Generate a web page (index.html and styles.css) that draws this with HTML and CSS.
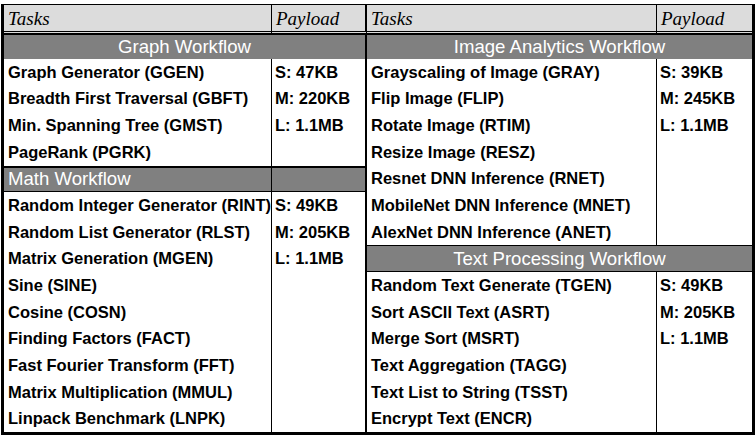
FILE: index.html
```html
<!DOCTYPE html>
<html>
<head>
<meta charset="utf-8">
<link rel="stylesheet" href="styles.css">
</head>
<body>
<table class="tasks">
  <colgroup>
    <col class="c-task"><col class="c-pay"><col class="c-task2"><col class="c-pay2">
  </colgroup>
  <thead>
    <tr>
      <th class="b1">Tasks</th><th class="b2">Payload</th><th class="b1">Tasks</th><th>Payload</th>
    </tr>
  </thead>
  <tbody>
    <tr class="first">
      <td colspan="2" class="band b2">Graph Workflow</td>
      <td colspan="2" class="band">Image Analytics Workflow</td>
    </tr>
    <tr>
      <td class="b1">Graph Generator (GGEN)</td><td class="b2">S: 47KB</td>
      <td class="b1">Grayscaling of Image (GRAY)</td><td>S: 39KB</td>
    </tr>
    <tr>
      <td class="b1">Breadth First Traversal (GBFT)</td><td class="b2">M: 220KB</td>
      <td class="b1">Flip Image (FLIP)</td><td>M: 245KB</td>
    </tr>
    <tr>
      <td class="b1">Min. Spanning Tree (GMST)</td><td class="b2">L: 1.1MB</td>
      <td class="b1">Rotate Image (RTIM)</td><td>L: 1.1MB</td>
    </tr>
    <tr>
      <td class="b1">PageRank (PGRK)</td><td class="b2"></td>
      <td class="b1">Resize Image (RESZ)</td><td></td>
    </tr>
    <tr>
      <td class="band band-left math b1">Math Workflow</td><td class="band math b2"></td>
      <td class="b1">Resnet DNN Inference (RNET)</td><td></td>
    </tr>
    <tr>
      <td class="b1">Random Integer Generator (RINT)</td><td class="b2">S: 49KB</td>
      <td class="b1">MobileNet DNN Inference (MNET)</td><td></td>
    </tr>
    <tr>
      <td class="b1">Random List Generator (RLST)</td><td class="b2">M: 205KB</td>
      <td class="b1">AlexNet DNN Inference (ANET)</td><td></td>
    </tr>
    <tr>
      <td class="b1">Matrix Generation (MGEN)</td><td class="b2">L: 1.1MB</td>
      <td colspan="2" class="band text">Text Processing Workflow</td>
    </tr>
    <tr>
      <td class="b1">Sine (SINE)</td><td class="b2"></td>
      <td class="b1">Random Text Generate (TGEN)</td><td>S: 49KB</td>
    </tr>
    <tr>
      <td class="b1">Cosine (COSN)</td><td class="b2"></td>
      <td class="b1">Sort ASCII Text (ASRT)</td><td>M: 205KB</td>
    </tr>
    <tr>
      <td class="b1">Finding Factors (FACT)</td><td class="b2"></td>
      <td class="b1">Merge Sort (MSRT)</td><td>L: 1.1MB</td>
    </tr>
    <tr>
      <td class="b1">Fast Fourier Transform (FFT)</td><td class="b2"></td>
      <td class="b1">Text Aggregation (TAGG)</td><td></td>
    </tr>
    <tr>
      <td class="b1">Matrix Multiplication (MMUL)</td><td class="b2"></td>
      <td class="b1">Text List to String (TSST)</td><td></td>
    </tr>
    <tr>
      <td class="b1">Linpack Benchmark (LNPK)</td><td class="b2"></td>
      <td class="b1">Encrypt Text (ENCR)</td><td></td>
    </tr>
  </tbody>
</table>
</body>
</html>
```

FILE: styles.css
```css
html, body {
  margin: 0;
  padding: 0;
  background: #fff;
}

.tasks {
  margin: 4px 0 0 1px;
  width: 754px;
  table-layout: fixed;
  border-collapse: separate;
  border-spacing: 0;
  border-left: 3px solid #000;
  border-right: 3px solid #000;
  border-top: 1px solid #000;
  border-bottom: 3px solid #000;
  font-family: "Liberation Sans", Arial, sans-serif;
  font-weight: bold;
  font-size: 16.5px;
  color: #000;
}

.c-task { width: 268px; }
.c-pay { width: 95px; }
.c-task2 { width: 290px; }
.c-pay2 { width: auto; }

.tasks th,
.tasks td {
  box-sizing: border-box;
  padding: 0 0 0 4px;
  text-align: left;
  white-space: nowrap;
  overflow: visible;
}

.tasks th {
  height: 29px;
  background: #dcdcdc;
  border-bottom: 3px double #000;
  font-family: "Liberation Serif", "Times New Roman", serif;
  font-style: italic;
  font-weight: normal;
  font-size: 19px;
  padding-top: 1px;
}

.tasks td {
  height: 26.65px;
}

.tasks .b1 { border-right: 1px solid #000; }
.tasks .b2 { border-right: 2px solid #000; }

.tasks td:nth-child(2),
.tasks td:nth-child(4) { padding-left: 3px; }

.tasks tr.first td {
  height: 25px;
  border-top: 1px solid #000;
}

.tasks td.band {
  background: #808080;
  color: #fff;
  font-weight: normal;
  font-size: 18.6px;
  text-align: center;
  padding-left: 0;
}

.tasks td.band-left {
  text-align: left;
  padding-left: 4px;
}

.tasks td.math {
  border-top: 2px solid #000;
  border-bottom: 1px solid #000;
}

.tasks td.text {
  border-top: 1px solid #000;
  border-bottom: 1px solid #000;
}
```
